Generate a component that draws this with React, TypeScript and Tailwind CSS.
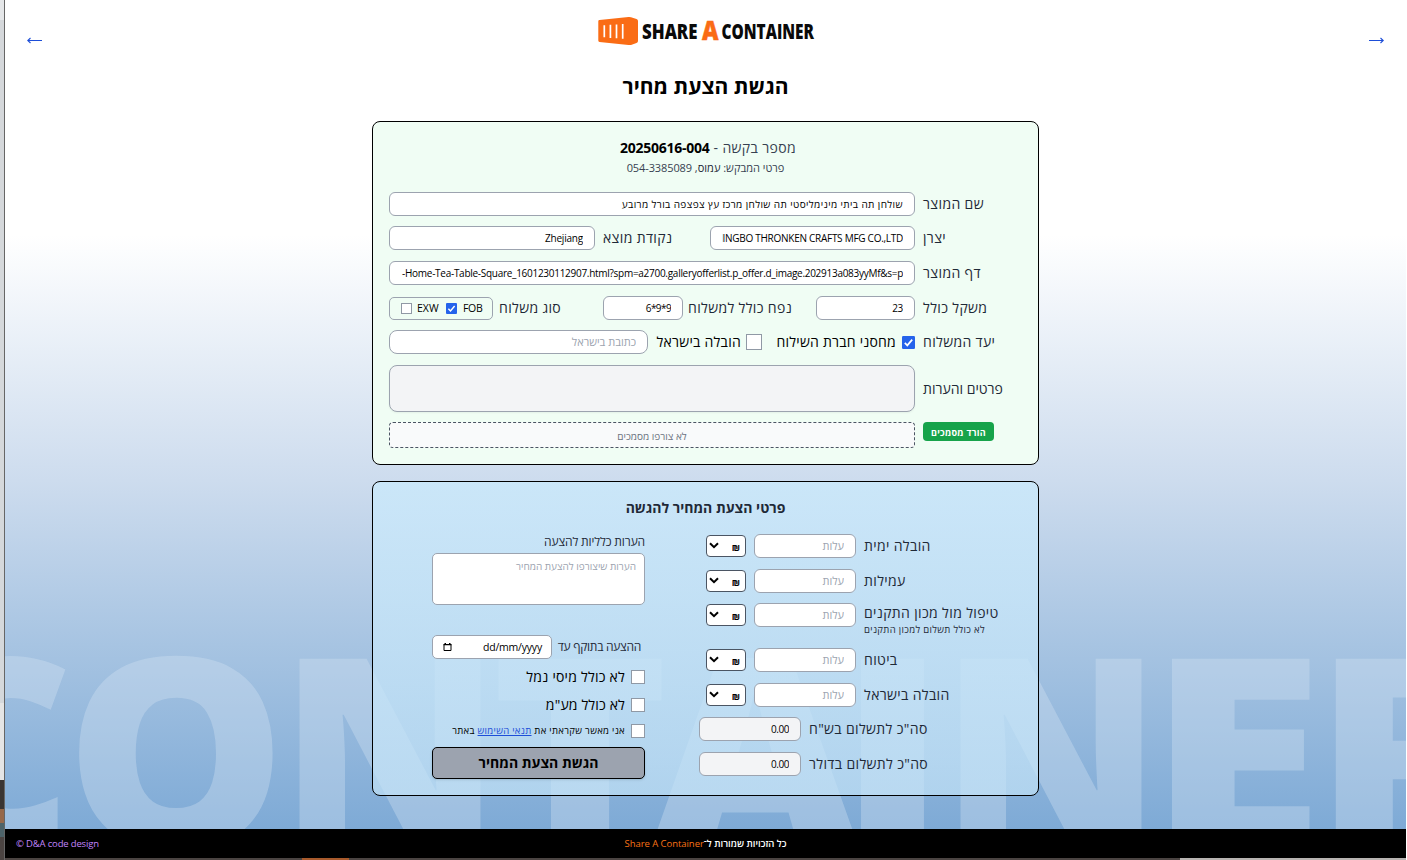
import type { ReactNode } from "react";

const LABEL = "shrink-0 whitespace-nowrap text-left text-[14px] leading-none font-medium tracking-[0.35px] text-[#1f2937]";

function Field({ className = "", textClass = "tracking-[-0.3px]", muted = false, children }: { className?: string; textClass?: string; muted?: boolean; children?: ReactNode }) {
  return (
    <div className={`flex h-6 shrink-0 items-center rounded-[6px] border border-[#9ca3af] px-[11px] ${muted ? "bg-[#f3f4f6]" : "bg-white"} ${className}`}>
      <div className={`flex min-w-0 flex-1 justify-start overflow-hidden whitespace-nowrap text-[10px] leading-[18px] text-black ${textClass}`}>
        {children}
      </div>
    </div>
  );
}

function Check({ checked = false, className = "" }: { checked?: boolean; className?: string }) {
  return checked ? (
    <svg viewBox="0 0 13 13" className={`shrink-0 ${className}`}>
      <rect width="13" height="13" rx="1.2" fill="#2563eb" />
      <path d="M2.8 6.9 5.3 9.4 10.2 3.6" fill="none" stroke="#fff" strokeWidth="1.7" />
    </svg>
  ) : (
    <span className={`shrink-0 border border-[#9099a5] bg-white ${className}`} />
  );
}

function Logo() {
  return (
    <svg width="218" height="32" viewBox="597 15 218 32" direction="ltr" className="block">
      <path d="M599.5 20 628.5 17Q630 16.9 631 17.2L636.5 18.9Q638 19.5 638 21V41Q638 42.6 636.5 43.1L631 44.9Q630 45.2 628.5 45L599.5 42Q598.3 41.8 598.3 40.5V21.3Q598.3 20.1 599.5 20Z" fill="#fa6c15" />
      <path d="M604.3 25.3V37.3M610.4 24.8V37.9M616.5 24.4V38.3M622.7 24V38.8" stroke="#fff" strokeWidth="1.7" />
      <g fontFamily="Open Sans" fontWeight="800">
        <text x="642" y="38.8" fontSize="20.5" textLength="55.500" lengthAdjust="spacingAndGlyphs" fill="#0a0a0a">SHARE</text>
        <text x="702" y="40" fontSize="27" textLength="16.500" lengthAdjust="spacingAndGlyphs" fill="#fa6c15" stroke="#fa6c15" strokeWidth="0.5">A</text>
        <text x="721.5" y="38.8" fontSize="20.5" textLength="92.500" lengthAdjust="spacingAndGlyphs" fill="#0a0a0a">CONTAINER</text>
      </g>
    </svg>
  );
}

const LETTERS: [string, number, number][] = [
  ["C", -88, 161],
  ["O", 65, 222],
  ["N", 279, 222],
  ["T", 491, 178],
  ["A", 651, 208],
  ["I", 836, 113],
  ["N", 940, 222],
  ["E", 1147, 178],
  ["R", 1313, 200],
];

function Watermark() {
  return (
    <svg
      aria-hidden="true"
      direction="ltr"
      viewBox="5 0 1401 829"
      className="pointer-events-none absolute inset-0 h-full w-full"
      fontFamily="Open Sans"
      fontWeight="800"
      fontSize="265"
      fill="#d6e6f3"
      fillOpacity="0.35"
    >
      {LETTERS.map(([ch, x, w]) => (
        <text key={x} x={x} y="848" textLength={w} lengthAdjust="spacingAndGlyphs">
          {ch}
        </text>
      ))}
    </svg>
  );
}

function Row({ label, labelClass = "", className = "", children }: { label: ReactNode; labelClass?: string; className?: string; children: ReactNode }) {
  return (
    <div className={`flex items-center gap-2 ${className}`}>
      <div className={`w-[99px] ${LABEL}`}>
        <span className={labelClass}>{label}</span>
      </div>
      <div className="flex w-[526px] shrink-0 items-center">{children}</div>
    </div>
  );
}

function RequestCard() {
  return (
    <section className="h-[344px] w-[667px] shrink-0 rounded-[8px] border border-black bg-[#f0fdf4] px-4">
      <div className="mt-[18px] pl-[5px] text-center text-[14px] leading-4 tracking-[0.35px] text-[#374151]">
        מספר בקשה - <b className="tracking-[-0.25px] text-black">20250616-004</b>
      </div>
      <div className="mt-1 text-center text-[11px] leading-4 text-[#374151]">
        פרטי המבקש: <span className="text-[#1f2937]">עמוס</span>, <span className="tracking-[-0.1px]">054-3385089</span>
      </div>

      <Row label="שם המוצר" className="mt-4">
        <Field className="w-[526px]" textClass="tracking-[0.39px]">שולחן תה ביתי מינימליסטי תה שולחן מרכז עץ צפצפה בורל מרובע</Field>
      </Row>
      <Row label="יצרן" className="mt-[10px]">
        <Field className="w-[205px]" textClass="tracking-[-0.27px]">
          <span dir="ltr">NINGBO THRONKEN CRAFTS MFG CO.,LTD</span>
        </Field>
        <span className={`w-[115px] pl-2 ${LABEL}`}>נקודת מוצא</span>
        <Field className="w-[206px]" textClass="tracking-[-0.2px]">Zhejiang</Field>
      </Row>
      <Row label="דף המוצר" className="mt-[11px]">
        <Field className="w-[526px]" textClass="tracking-[-0.28px]">
          <span dir="ltr">-Home-Tea-Table-Square_1601230112907.html?spm=a2700.galleryofferlist.p_offer.d_image.202913a083yyMf&amp;s=p</span>
        </Field>
      </Row>
      <Row label="משקל כולל" className="mt-[11px]">
        <Field className="w-[99px]">23</Field>
        <span className={`w-[133px] pl-[5px] ${LABEL}`}>נפח כולל למשלוח</span>
        <Field className="w-20" textClass="tracking-[-0.6px]">
          <span dir="ltr">6*9*9</span>
        </Field>
        <span className={`w-[110px] pl-[6px] ${LABEL}`}>סוג משלוח</span>
        <div dir="ltr" className="flex h-[23px] w-[104px] shrink-0 items-center rounded-[5px] border border-[#9ca3af] pl-[11px] text-[10.5px] leading-none text-black">
          <Check className="size-[11px]" />
          <span className="ml-[5px] w-[29px]">EXW</span>
          <Check checked className="size-[11px]" />
          <span className="ml-[6px] tracking-[-0.3px]">FOB</span>
        </div>
      </Row>
      <Row label="יעד המשלוח" className="mt-[10px]">
        <Check checked className="size-[13px]" />
        <span className="mr-[6px] w-[134px] shrink-0 whitespace-nowrap text-[14px] leading-none tracking-[0.22px] text-black">מחסני חברת השילוח</span>
        <Check className="size-4" />
        <span className="mr-[5px] w-[93px] shrink-0 whitespace-nowrap text-[14px] leading-none tracking-[0.25px] text-black">הובלה בישראל</span>
        <Field className="w-[259px] rounded-[8px]" textClass="tracking-normal">
          <span className="text-[11px] text-[#9ca3af]">כתובת בישראל</span>
        </Field>
      </Row>
      <Row label="פרטים והערות" labelClass="font-normal tracking-normal" className="mt-[11px]">
        <div className="h-[47px] w-[526px] rounded-[8px] border border-[#9ca3af] bg-[#f3f4f6] shadow-xs" />
      </Row>
      <div className="mt-[10px] flex items-start gap-2">
        <div className="flex w-[99px] shrink-0 justify-end">
          <button className="h-[19px] w-[71px] rounded-[4px] bg-[#16a34a] pt-px text-[9px] leading-none font-bold tracking-[0.3px] whitespace-nowrap text-white">הורד מסמכים</button>
        </div>
        <div className="flex h-[26px] w-[526px] items-center justify-center rounded-[4px] border border-dashed border-[#4b5563] bg-[#f9fafb] pt-px text-[10px] leading-none text-[#6b7280]">
          לא צורפו מסמכים
        </div>
      </div>
    </section>
  );
}

function CostRow({ label, note, className }: { label: string; note?: string; className: string }) {
  return (
    <div className={`flex items-start gap-2 ${className}`}>
      <div className={`w-[158px] ${LABEL}`}>
        <div className={note ? "mt-[3px]" : "mt-[5px]"}>{label}</div>
        {note && <div className="mt-[5px] text-[9.5px] leading-none font-normal tracking-[0.35px]">{note}</div>}
      </div>
      <Field className="w-[102px]" textClass="tracking-normal">
        <span className="text-[11px] text-[#9ca3af]">עלות</span>
      </Field>
      <div className="mt-px flex h-[22px] w-10 items-center justify-between rounded-[4px] border border-[#4b5563] bg-white pr-[5px] pl-[2px] text-[9px] font-bold text-black">
        <span className="mt-[2px] leading-none">₪</span>
        <svg width="10" height="7" viewBox="0 0 10 7" className="mb-px">
          <path d="M1 1.2 5 5.2 9 1.2" fill="none" stroke="#000" strokeWidth="2" />
        </svg>
      </div>
    </div>
  );
}

function TotalRow({ label, className }: { label: string; className: string }) {
  return (
    <div className={`flex items-center gap-2 ${className}`}>
      <span className={`w-[213px] ${LABEL}`}>{label}</span>
      <Field muted className="w-[102px]" textClass="tracking-[-0.45px]">0.00</Field>
    </div>
  );
}

function OfferCard() {
  return (
    <section className="mt-4 h-[315px] w-[667px] shrink-0 rounded-[8px] border border-black bg-[linear-gradient(to_bottom,rgba(202,233,251,0.8)_0%,rgba(196,228,248,0.68)_100%)] px-4">
      <h2 className="mt-[18px] text-center text-[14px] leading-4 font-bold text-[#1f2937]">פרטי הצעת המחיר להגשה</h2>
      <div className="mt-[18px] flex items-start gap-[54px]">
        <div className="w-[323px] shrink-0">
          <CostRow label="הובלה ימית" className="h-[35px]" />
          <CostRow label="עמילות" className="h-[34px]" />
          <CostRow label="טיפול מול מכון התקנים" note="לא כולל תשלום למכון התקנים" className="h-[45px]" />
          <CostRow label="ביטוח" className="h-[35px]" />
          <CostRow label="הובלה בישראל" className="h-[34px]" />
          <TotalRow label={'סה"כ לתשלום בש"ח'} className="" />
          <TotalRow label={'סה"כ לתשלום בדולר'} className="mt-[11px]" />
        </div>
        <div className="w-[213px] shrink-0 text-black">
          <div className="mt-[1px] text-[12px] leading-[14px] font-medium tracking-[-0.12px] text-[#1f2937]">הערות כלליות להצעה</div>
          <div className="mt-1 h-[52px] rounded-[5px] border border-[#9ca3af] bg-white px-2 pt-[7px] text-[10px] leading-none text-[#9ca3af]">
            הערות שיצורפו להצעת המחיר
          </div>
          <div className="mt-[30px] flex h-6 items-center justify-between pr-1">
            <span className="text-[12px] leading-none font-medium tracking-[-0.28px] whitespace-nowrap text-[#1f2937]">ההצעה בתוקף עד</span>
            <div dir="ltr" className="flex h-6 w-[120px] items-center justify-between rounded-[5px] border border-[#9ca3af] bg-white pr-[9px] pl-[10px] text-[10.5px] tracking-[-0.2px]">
              <svg width="9" height="10" viewBox="0 0 9 10">
                <path d="M1 2.5H8V8.5H1Z" fill="none" stroke="#000" />
                <path d="M.5 2H8.5V3.2H.5ZM1.5 1H3V2H1.5ZM6 1H7.5V2H6Z" fill="#000" />
              </svg>
              <span className="mt-px">dd/mm/yyyy</span>
            </div>
          </div>
          <div className="mt-[11px] flex h-[14px] items-center gap-[6px] text-[14px] leading-none tracking-[0.22px] whitespace-nowrap">
            <Check className="size-[14px]" />
            לא כולל מיסי נמל
          </div>
          <div className="mt-[14px] flex h-[14px] items-center gap-[6px] text-[14px] leading-none tracking-[0.15px] whitespace-nowrap">
            <Check className="size-[14px]" />
            לא כולל מע"מ
          </div>
          <div className="mt-3 flex h-[14px] items-center gap-[6px] text-[9.5px] leading-none tracking-[0.32px] whitespace-nowrap">
            <Check className="size-[14px]" />
            <span>
              אני מאשר שקראתי את <a className="text-[#1d4ed8] underline">תנאי השימוש</a> באתר
            </span>
          </div>
          <button className="mt-[9px] block h-8 w-full rounded-[5px] border border-black bg-[#9ca3af] text-[14px] leading-none font-bold shadow-sm">הגשת הצעת המחיר</button>
        </div>
      </div>
    </section>
  );
}

export default function App() {
  return (
    <div className="flex h-[860px] w-[1407px] overflow-hidden bg-white font-['Open_Sans','Noto_Sans',sans-serif]">
      <div className="flex w-[5px] shrink-0 flex-col border-r border-[#666]">
        <div className="h-[20px] bg-[#e5e7e9]" />
        <div className="h-[683px] bg-[#d5d8db]" />
        <div className="h-[77px] bg-[#e5e5e5]" />
        <div className="h-[29px] bg-[#3a3533]" />
        <div className="h-[14px] bg-[#96684a]" />
        <div className="h-[14px] bg-[#4d6369]" />
        <div className="h-[23px] bg-[#4b4442]" />
      </div>
      <div dir="rtl" className="flex w-[1401px] shrink-0 flex-col">
        <main className="relative h-[829px] shrink-0 overflow-hidden bg-[linear-gradient(to_bottom,#ffffff_235px,#cddcee_480px,#a7c4e2_645px,#7eaad6_829px)]">
          <Watermark />
          <div className="relative flex flex-col items-center">
            <div className="flex h-[47px] w-full items-start justify-between px-[22px] pt-[15px]">
              <svg width="15" height="9" viewBox="0 0 15 9" className="mt-[21px] block">
                <path d="M0 4.5H14M11.5 2 14.2 4.5 11.5 7" fill="none" stroke="#1d4ed8" strokeWidth="1.1" />
              </svg>
              <Logo />
              <svg width="15" height="9" viewBox="0 0 15 9" className="mt-[21px] block">
                <path d="M15 4.5H1M3.5 2 .8 4.5 3.5 7" fill="none" stroke="#1d4ed8" strokeWidth="1.1" />
              </svg>
            </div>
            <h1 className="mt-[25px] mb-[21px] text-[21px] leading-7 font-bold text-black">הגשת הצעת מחיר</h1>
            <RequestCard />
            <OfferCard />
          </div>
        </main>
        <footer className="grid h-[29px] shrink-0 grid-cols-3 items-center bg-black px-[11px] text-[9.5px] leading-none text-white">
          <span />
          <span className="text-center font-semibold whitespace-nowrap">
            כל הזכויות שמורות ל־<span className="font-medium tracking-[-0.05px] text-[#f97316]">Share A Container</span>
          </span>
          <span dir="ltr" className="text-left tracking-[-0.16px] text-[#c084fc]">© D&amp;A code design</span>
        </footer>
        <div dir="ltr" className="flex h-[2px]">
          <div className="w-[297px] bg-[#4b4442]" />
          <div className="w-[47px] bg-[#a85a2c]" />
          <div className="w-[831px] bg-[#4b4442]" />
          <div className="flex-1 bg-[#b8b4b2]" />
        </div>
      </div>
    </div>
  );
}
